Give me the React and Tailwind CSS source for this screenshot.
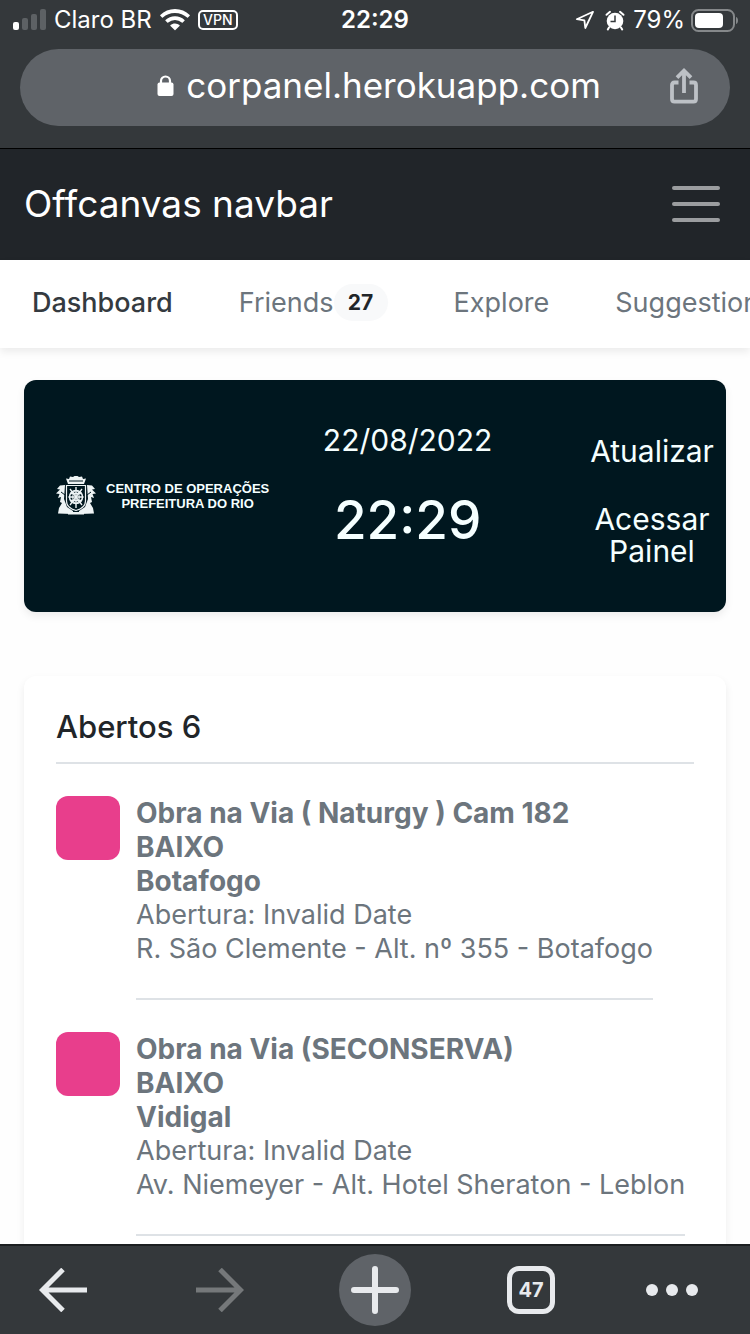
const incidents = [
  {
    title: "Obra na Via ( Naturgy ) Cam 182",
    level: "BAIXO",
    district: "Botafogo",
    address: "R. São Clemente - Alt. nº 355 - Botafogo",
  },
  {
    title: "Obra na Via (SECONSERVA)",
    level: "BAIXO",
    district: "Vidigal",
    address: "Av. Niemeyer - Alt. Hotel Sheraton - Leblon",
  },
];

function StatusBar() {
  return (
    <div className="grid h-10 grid-cols-[1fr_auto_1fr] items-center text-[24px] leading-none text-white">
      <div className="flex items-center pl-3">
        <svg width="34" height="22" viewBox="0 0 34 22" aria-hidden="true">
          <rect x="1" y="13" width="6" height="8" rx="2" fill="#fff" />
          <rect x="10" y="9" width="6" height="12" rx="2" fill="#5d6164" />
          <rect x="19" y="5" width="6" height="16" rx="2" fill="#5d6164" />
          <rect x="28" y="0" width="6" height="21" rx="2" fill="#5d6164" />
        </svg>
        <span className="ml-2 whitespace-nowrap">Claro BR</span>
        <svg className="ml-2" width="30" height="22" viewBox="0 0 30 22" fill="#fff" aria-hidden="true">
          <path d="M15 0C9.300 0 4.100 2.200.3 5.900c-.3.300-.3.600 0 .9l1.700 1.700c.3.300.6.300.9 0A17.400 17.400 0 0 1 15 3.900c4.700 0 9 1.800 12.100 4.600.3.300.6.300.9 0l1.700-1.700c.3-.3.300-.6 0-.9C25.900 2.200 20.700 0 15 0Z" />
          <path d="M15 7.200c-3.700 0-7 1.400-9.500 3.700-.3.300-.3.600 0 .9l1.800 1.800c.3.300.6.300.9 0a10 10 0 0 1 13.600 0c.3.300.6.300.9 0l1.800-1.800c.3-.3.300-.6 0-.9A13.900 13.900 0 0 0 15 7.200Z" />
          <path d="M15 14.400c-1.700 0-3.300.6-4.500 1.700-.3.300-.3.600 0 .9l4.100 4.100c.3.300.5.300.8 0l4.100-4.100c.3-.3.300-.6 0-.9a6.600 6.600 0 0 0-4.500-1.700Z" />
        </svg>
        <span className="ml-2 flex h-5 w-10 items-center justify-center rounded-[5px] border-2 border-white text-[14px] font-medium leading-none">
          VPN
        </span>
      </div>
      <span className="font-semibold">22:29</span>
      <div className="flex items-center justify-end pr-3">
        <svg width="20" height="20" viewBox="0 0 20 20" fill="none" stroke="#fff" strokeWidth="1.800" strokeLinejoin="round" aria-hidden="true">
          <path d="M18 1.800 1.800 9.200l7.600 1.200.900 7.600Z" />
        </svg>
        <svg className="ml-2.5" width="20" height="21" viewBox="0 0 20 21" aria-hidden="true">
          <circle cx="10" cy="11" r="8.300" fill="#fff" />
          <path d="M1.500 4.800 5 1.800M18.500 4.800 15 1.800M4 17.500 2.800 19.500M16 17.500l1.200 2" stroke="#fff" strokeWidth="2" strokeLinecap="round" />
          <path d="M10 5.500V11.500H5.500" fill="none" stroke="#34383b" strokeWidth="1.500" />
        </svg>
        <span className="ml-2">79%</span>
        <svg className="ml-1.5" width="47" height="23" viewBox="0 0 47 23" aria-hidden="true">
          <rect x="1" y="1" width="42" height="21" rx="6.500" fill="none" stroke="#85888a" strokeWidth="2" />
          <rect x="4" y="4" width="28" height="15" rx="4" fill="#fff" />
          <path d="M45 8c1.700.6 2 2 2 3.500s-.3 2.900-2 3.500Z" fill="#85888a" />
        </svg>
      </div>
    </div>
  );
}

function AddressBar() {
  return (
    <div className="px-5 pt-[9px] pb-[22px]">
      <div className="relative flex h-[77px] items-center justify-center rounded-full bg-[#5f6368] pl-2">
        <a href="#" className="flex items-center gap-3 pb-1 text-[35px] leading-none text-white">
          <svg width="17" height="21" viewBox="0 0 17 21" aria-hidden="true">
            <rect x="0.500" y="7.500" width="16" height="13.500" rx="2" fill="#fff" />
            <path d="M4 8.500V6a4.500 4.500 0 0 1 9 0V8.500" fill="none" stroke="#fff" strokeWidth="2.200" />
          </svg>
          corpanel.herokuapp.com
        </a>
        <button type="button" aria-label="Compartilhar" className="absolute inset-y-0 right-8 flex items-center pb-1">
          <svg width="28" height="36" viewBox="0 0 28 36" fill="none" stroke="#bdc1c6" strokeWidth="3.800" aria-hidden="true">
            <path d="M8.500 14.500H4.500Q2 14.500 2 17v14q0 2.700 2.500 2.700h19q2.500 0 2.500-2.700V17q0-2.500-2.500-2.500h-4" />
            <path d="M14 25V3M7 9.700 14 2.700l7 7" />
          </svg>
        </button>
      </div>
    </div>
  );
}

function CoatOfArms() {
  return (
    <svg width="40" height="40" viewBox="0 0 40 40" aria-hidden="true">
      <g fill="#eef4f5">
        <path d="M10 2.500 13 3l1-2.500 3 .5 1.500-1h3L23 1l3-.5L27 3l3-.5-2 5.500H12Z" />
        <path d="M9 9 4 9.500 1 13l3 .5-4 4 3.500.5-1.500 4 3-1-1 5 2 1-3 5-1 5.500 14 .5 1-3-6-4-3-8Z" />
        <path d="m31 9 5 .5 3 3.500-3 .5 4 4-3.500.5 1.500 4-3-1 1 5-2 1 3 5 1 5.500-14 .5-1-3 6-4 3-8Z" />
        <path d="M12 35h16v3.500H12Z" />
      </g>
      <path d="M10.500 9.500h19v15.500q0 7-9.500 9.500-9.500-2.500-9.500-9.500Z" fill="#001820" stroke="#eef4f5" strokeWidth="1.200" />
      <g fill="none" stroke="#eef4f5">
        <circle cx="20" cy="21" r="6.500" strokeWidth="1.500" />
        <ellipse cx="20" cy="21" rx="3.200" ry="6.500" strokeWidth="1.200" />
        <path d="M20 11v21M12.500 21h15M14 17.500h12M14 24.500h12" strokeWidth="1.400" />
        <path d="m14 13 12 16M26 13 14 29" strokeWidth="1.300" />
        <path d="M13 5h14M5 16l4 3M35 16l-4 3M17 35.500h6" stroke="#001820" strokeWidth="1" />
      </g>
    </svg>
  );
}

function Banner() {
  return (
    <section className="flex min-h-[232px] items-center rounded-xl bg-[#00171f] pl-8 text-[#f5ffff] shadow-[0_4px_8px_rgba(0,0,0,0.075)]">
      <div className="flex items-center gap-2.5">
        <CoatOfArms />
        <p className="whitespace-nowrap text-center font-['Liberation_Sans',Arial,sans-serif] text-[13px] font-bold leading-[15px]">
          CENTRO DE OPERAÇÕES
          <br />
          PREFEITURA DO RIO
        </p>
      </div>
      <div className="flex flex-1 flex-col items-center gap-7 pr-8 pb-5">
        <time className="text-[30px] leading-10">22/08/2022</time>
        <time className="text-[53px] font-medium leading-[64px]">22:29</time>
      </div>
      <div className="flex w-[148px] flex-col items-center gap-9 pt-2.5 text-center text-[30px] leading-8">
        <button type="button">Atualizar</button>
        <a href="#">Acessar Painel</a>
      </div>
    </section>
  );
}

function Incident({ title, level, district, address }) {
  return (
    <li className="flex items-start gap-4 pt-8">
      <span className="size-16 shrink-0 rounded-xl bg-[#e83e8c]" />
      <div className="whitespace-nowrap border-b-2 border-[#dee2e6] pb-8 text-[27px] leading-[34px] text-[#6c757d]">
        <div className="text-[28px] font-bold">
          <h2>{title}</h2>
          <p>{level}</p>
          <p>{district}</p>
        </div>
        <p>Abertura: Invalid Date</p>
        <p>{address}</p>
      </div>
    </li>
  );
}

function BrowserToolbar() {
  return (
    <footer className="grid h-[90px] shrink-0 grid-cols-5 items-center border-t-2 border-[#1b1e20] bg-[#34383b]">
      <button type="button" aria-label="Voltar" className="flex justify-self-center pr-6">
        <svg width="48" height="44" viewBox="0 0 48 44" fill="none" stroke="#e8eaed" strokeWidth="5" aria-hidden="true">
          <path d="M48 22H4M24 1.500 3.500 22 24 42.500" />
        </svg>
      </button>
      <button type="button" aria-label="Avançar" disabled className="flex justify-self-center pr-2.5">
        <svg width="48" height="44" viewBox="0 0 48 44" fill="none" stroke="#75787a" strokeWidth="5" aria-hidden="true">
          <path d="M0 22h44M24 1.500 44.500 22 24 42.500" />
        </svg>
      </button>
      <button type="button" aria-label="Nova guia" className="flex size-[72px] items-center justify-center justify-self-center rounded-full bg-[#5f6368]">
        <svg width="48" height="48" viewBox="0 0 48 48" stroke="#e8eaed" strokeWidth="6" strokeLinecap="round" aria-hidden="true">
          <path d="M24 3v42M3 24h42" />
        </svg>
      </button>
      <div className="justify-self-center pl-3">
        <button type="button" aria-label="47 guias abertas" className="flex size-12 items-center justify-center rounded-xl border-[5px] border-[#e8eaed] text-[20px] font-bold leading-none text-[#e8eaed]">
          47
        </button>
      </div>
      <button type="button" aria-label="Mais opções" className="flex gap-2 justify-self-center pr-1.5">
        <span className="size-3 rounded-full bg-[#e8eaed]" />
        <span className="size-3 rounded-full bg-[#e8eaed]" />
        <span className="size-3 rounded-full bg-[#e8eaed]" />
      </button>
    </footer>
  );
}

export default function App() {
  return (
    <div className="flex h-screen flex-col overflow-hidden bg-white font-[Inter,sans-serif] text-[#212529]">
      <header className="shrink-0 border-b border-black bg-[#34383b]">
        <StatusBar />
        <AddressBar />
      </header>

      <div className="min-h-0 flex-1 overflow-hidden bg-[#fefefe]">
        <nav className="flex h-[111px] items-center justify-between bg-[#212529] pr-[30px] pb-0.5 pl-6">
          <a href="#" className="text-[37px] leading-none text-white">
            Offcanvas navbar
          </a>
          <button type="button" aria-label="Abrir menu" className="flex flex-col gap-3">
            <span className="h-1 w-12 rounded-full bg-[#9b9d9f]" />
            <span className="h-1 w-12 rounded-full bg-[#9b9d9f]" />
            <span className="h-1 w-12 rounded-full bg-[#9b9d9f]" />
          </button>
        </nav>

        <nav className="flex h-[88px] items-center gap-[66px] overflow-hidden whitespace-nowrap bg-white px-8 pb-1 text-[27px] leading-none text-[#6c757d] shadow-[0_4px_8px_rgba(0,0,0,0.075)]">
          <a href="#" className="font-medium text-[#343a40]">
            Dashboard
          </a>
          <a href="#" className="flex items-center">
            Friends
            <span className="flex h-[37px] w-[54px] items-center justify-center rounded-full bg-[#f8f9fa] text-[21px] font-bold text-[#212529]">
              27
            </span>
          </a>
          <a href="#">Explore</a>
          <a href="#">Suggestions</a>
        </nav>

        <main className="flex flex-col gap-16 px-6 pt-8">
          <Banner />
          <section className="rounded-xl bg-white px-8 pt-8 pb-8 shadow-[0_4px_8px_rgba(0,0,0,0.075)]">
            <h1 className="border-b-2 border-[#dee2e6] pb-4 text-[31px] font-medium leading-[38px]">Abertos 6</h1>
            <ul>
              {incidents.map((incident) => (
                <Incident key={incident.title} {...incident} />
              ))}
            </ul>
          </section>
        </main>
      </div>

      <BrowserToolbar />
    </div>
  );
}
